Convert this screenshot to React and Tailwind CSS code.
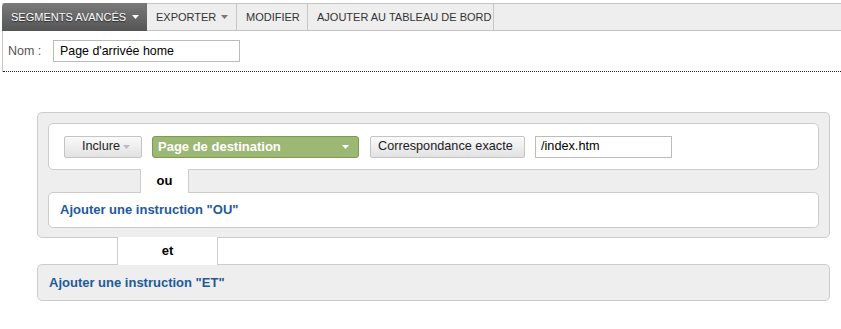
import React from "react";

function Caret({ className }) {
  return (
    <svg width="7" height="4" viewBox="0 0 7 4" className={className}>
      <path d="M0 0 L7 0 L3.5 4 Z" fill="currentColor" />
    </svg>
  );
}

function Toolbar() {
  return (
    <div className="ml-[2px] mt-[3px] flex h-[28px] border-y border-[#c6c6c6] bg-[#eeeeee] text-[11px] text-[#333]">
      <div className="-my-px flex w-[145px] items-center gap-[6px] rounded-tl-[4px] bg-gradient-to-b from-[#7a7a7a] to-[#555] pl-[9px] text-white [text-shadow:0_1px_1px_rgba(0,0,0,0.6)]">
        SEGMENTS AVANCÉS
        <Caret className="text-white" />
      </div>
      <div className="flex w-[90px] items-center gap-[5px] border-r border-[#c6c6c6] pl-[9px]">
        EXPORTER
        <Caret className="text-[#777]" />
      </div>
      <div className="flex w-[71px] items-center border-r border-[#c6c6c6] pl-[9px]">MODIFIER</div>
      <div className="flex w-[186px] items-center border-r border-[#c6c6c6] pl-[9px]">AJOUTER AU TABLEAU DE BORD</div>
    </div>
  );
}

export default function App() {
  return (
    <div className="relative h-[329px] w-[841px] overflow-hidden bg-white font-['Liberation_Sans',Arial,sans-serif] text-[12px] text-black">
      <Toolbar />

      <div className="ml-[2px] border-l border-[#c6c6c6] pt-[9px]">
        <div className="flex items-center">
          <span className="ml-[5px] w-[45px] text-[12.5px] text-[#555]">Nom :</span>
          <div className="flex h-[22px] w-[187px] items-center border border-[#bbb] pl-[6px] text-[12.4px]">Page d'arrivée home</div>
        </div>
        <div className="mt-[9px] border-b border-dotted border-[#222]" />
      </div>

      <div className="ml-[37px] mt-[40px] w-[793px]">
        {/* outer block */}
        <div className="rounded-[5px] border border-[#cccccc] bg-[#eeeeee] px-[10px] pb-[9px] pt-[10px]">
          <div className="flex h-[47px] items-center gap-[10px] rounded-[5px] border border-[#cccccc] bg-white pl-[15px] text-[12.7px]">
            <div className="flex h-[22px] w-[78px] items-center justify-end gap-[3px] rounded-[2px] border border-[#c4c4c4] bg-gradient-to-b from-[#fafafa] to-[#e2e2e2] pr-[11px] text-[#222]">
              Inclure
              <Caret className="text-[#bbb]" />
            </div>
            <div className="flex h-[22px] w-[207px] items-center justify-between rounded-[3px] border border-[#7c9a58] bg-[#9cb874] pl-[5px] pr-[9px] text-[13px] font-bold text-white">
              Page de destination
              <Caret className="text-white" />
            </div>
            <div className="ml-px flex h-[22px] w-[155px] items-center rounded-[2px] border border-[#c4c4c4] bg-gradient-to-b from-[#fafafa] to-[#e2e2e2] pl-[7px] text-[#222]">
              Correspondance exacte
            </div>
            <div className="flex h-[22px] w-[137px] items-center border border-[#bbb] pl-[5px]">/index.htm</div>
          </div>

          <div className="relative z-10 -my-px ml-[92px] flex h-[24px] w-[49px] items-center justify-center border-x border-[#cccccc] bg-white text-[13px] font-bold">
            ou
          </div>

          <div className="flex h-[36px] items-center rounded-[5px] border border-[#cccccc] bg-white pl-[11px] text-[13px] font-bold text-[#1d5a9b]">
            Ajouter une instruction "OU"
          </div>
        </div>

        <div className="relative z-10 -my-px ml-[80px] flex h-[28px] w-[101px] items-center justify-center border-x border-[#cccccc] bg-white text-[13px] font-bold">
          et
        </div>

        <div className="flex h-[37px] items-center rounded-[5px] border border-[#cccccc] bg-[#eeeeee] pl-[11px] text-[13px] font-bold text-[#1d5a9b]">
          Ajouter une instruction "ET"
        </div>
      </div>
    </div>
  );
}
